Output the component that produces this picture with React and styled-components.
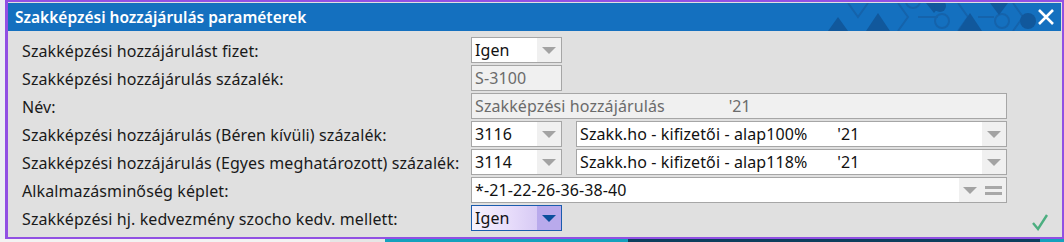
import React from 'react';
import styled, { createGlobalStyle } from 'styled-components';

const GlobalStyle = createGlobalStyle`
	html, body {
		margin: 0;
		padding: 0;
		background: #eceff2;
		overflow: hidden;
	}
	body {
		font-family: 'Noto Sans', 'Open Sans', sans-serif;
	}
`;

const Page = styled.div`
	width: 1064px;
	height: 242px;
	display: flex;
	flex-direction: column;
	background: #eceff2;
`;

const Dialog = styled.div`
	margin-left: 5px;
	width: 1059px;
	height: 239px;
	box-sizing: border-box;
	border: 2px solid #9150e3;
	border-left-width: 3px;
	padding: 1px 1px 0 0;
	background: #e0e0e0;
	display: flex;
	flex-direction: column;
`;

const TitleBar = styled.div`
	position: relative;
	height: 28px;
	flex: none;
	background: #1470bf;
	display: flex;
	align-items: center;
	padding: 0 6px 0 7px;
	overflow: hidden;
	> h1 {
		margin: 0;
		font-size: 15.5px;
		font-weight: 600;
		color: #ffffff;
		position: relative;
	}
`;

const Pattern = styled.svg`
	position: absolute;
	left: 800px;
	top: 0;
`;

const Close = styled.svg`
	margin-left: auto;
	position: relative;
`;

const Body = styled.div`
	flex: 1;
	display: flex;
	padding: 6px 0 0 14px;
	position: relative;
`;

const Form = styled.div`
	display: grid;
	grid-template-columns: 449px auto;
	grid-auto-rows: 26px;
	row-gap: 2px;
	align-items: center;
`;

const Label = styled.div`
	font-size: 16px;
	letter-spacing: 0.1px;
	color: #1a1a1a;
	white-space: nowrap;
	padding-top: 1px;
`;

const Field = styled.div`
	display: flex;
	gap: 14px;
	height: 26px;
`;

const Box = styled.div`
	width: ${p => p.w}px;
	height: 26px;
	box-sizing: border-box;
	display: flex;
	border: 1px solid ${p => (p.active ? '#1b5cae' : '#a6a6a6')};
	background: ${p =>
		p.active
			? 'linear-gradient(90deg, #f6f2fd 0%, #e6dbfa 45%, #c9baf0 100%)'
			: p.disabled
			? '#f0f0f0'
			: '#ffffff'};
`;

const Value = styled.div`
	flex: 1;
	padding-left: 3px;
	font-size: 16px;
	letter-spacing: 0.1px;
	line-height: 24px;
	white-space: pre;
	color: ${p => (p.disabled ? '#6b6b6b' : '#111111')};
	overflow: hidden;
`;

const Button = styled.div`
	width: ${p => p.w || 24}px;
	display: flex;
	align-items: center;
	justify-content: center;
	gap: 8px;
	background: ${p => (p.active ? '#b9aaec' : '#f0f0f0')};
`;

const Arrow = styled.div`
	width: 0;
	height: 0;
	border-left: 7px solid transparent;
	border-right: 7px solid transparent;
	border-top: 7px solid ${p => (p.active ? '#0b4f9c' : '#a3a3a3')};
`;

const Equals = styled.div`
	width: 17px;
	height: 9px;
	border-top: 3px solid #a8a8a8;
	border-bottom: 3px solid #a8a8a8;
	box-sizing: border-box;
`;

const Check = styled.svg`
	position: absolute;
	right: 12px;
	bottom: 6px;
`;

const Backdrop = styled.div`
	flex: 1;
	display: flex;
`;

const Strip = styled.div`
	width: ${p => p.w}px;
	background: ${p => p.c};
	flex: ${p => (p.w ? 'none' : 1)};
`;

const Select = ({ w, value, active, disabled }) => (
	<Box w={w} active={active} disabled={disabled}>
		<Value disabled={disabled}>{value}</Value>
		<Button active={active}>
			<Arrow active={active} />
		</Button>
	</Box>
);

const Input = ({ w, value, disabled }) => (
	<Box w={w} disabled={disabled}>
		<Value disabled={disabled}>{value}</Value>
	</Box>
);

const HexPattern = () => (
	<Pattern width="240" height="28" viewBox="0 0 240 28">
		<g fill="none" stroke="#1563ab" strokeWidth="2">
			<circle cx="105" cy="-2" r="7" />
			<circle cx="134" cy="18" r="7" />
			<circle cx="194" cy="18" r="7" />
			<circle cx="250" cy="18" r="7" />
			<path d="M90 0 L100 14 L90 28 M110 14 L130 14 M150 0 L160 14 L150 28 M170 14 L186 14 M205 0 L215 14 L205 28" />
			<path d="M40 0 L50 14 L60 0 M60 28 L70 14 L80 28" />
		</g>
		<g fill="#11589c">
			<path d="M58 28 L70 10 L82 28 Z" />
			<path d="M118 0 L134 0 L126 10 Z" />
			<path d="M150 28 L162 10 L174 28 Z" />
			<path d="M182 0 L200 0 L191 12 Z" />
			<circle cx="132" cy="3" r="6" />
			<circle cx="220" cy="18" r="8" />
			<path d="M20 28 L30 14 L40 28 Z" />
		</g>
	</Pattern>
);

const App = () => (
	<Page>
		<GlobalStyle />
		<Dialog>
			<TitleBar>
				<HexPattern />
				<h1>Szakképzési hozzájárulás paraméterek</h1>
				<Close width="18" height="18" viewBox="0 0 18 18">
					<path d="M2 2 L16 16 M16 2 L2 16" stroke="#ffffff" strokeWidth="2.6" />
				</Close>
			</TitleBar>
			<Body>
				<Form>
					<Label>Szakképzési hozzájárulást fizet:</Label>
					<Field>
						<Select w={91} value="Igen" />
					</Field>

					<Label>Szakképzési hozzájárulás százalék:</Label>
					<Field>
						<Input w={91} value="S-3100" disabled />
					</Field>

					<Label>Név:</Label>
					<Field>
						<Input w={536} value={'Szakképzési hozzájárulás               \'21'} disabled />
					</Field>

					<Label>Szakképzési hozzájárulás (Béren kívüli) százalék:</Label>
					<Field>
						<Select w={91} value="3116" />
						<Select w={431} value={"Szakk.ho - kifizetői - alap100%       '21"} />
					</Field>

					<Label>Szakképzési hozzájárulás (Egyes meghatározott) százalék:</Label>
					<Field>
						<Select w={91} value="3114" />
						<Select w={431} value={"Szakk.ho - kifizetői - alap118%       '21"} />
					</Field>

					<Label>Alkalmazásminőség képlet:</Label>
					<Field>
						<Box w={536}>
							<Value>*-21-22-26-36-38-40</Value>
							<Button w={47}>
								<Arrow />
								<Equals />
							</Button>
						</Box>
					</Field>

					<Label>Szakképzési hj. kedvezmény szocho kedv. mellett:</Label>
					<Field>
						<Select w={91} value="Igen" active />
					</Field>
				</Form>
				<Check width="18" height="18" viewBox="0 0 18 18">
					<path d="M2 10 L7 16 L16 2" fill="none" stroke="#4cae80" strokeWidth="2.4" />
				</Check>
			</Body>
		</Dialog>
		<Backdrop>
			<Strip w={330} c="#f3f3f3" />
			<Strip w={55} c="#e6e6e6" />
			<Strip w={243} c="#15a1bd" />
			<Strip w={412} c="#0d3f5e" />
			<Strip c="#15a1bd" />
		</Backdrop>
	</Page>
);

export default App;
